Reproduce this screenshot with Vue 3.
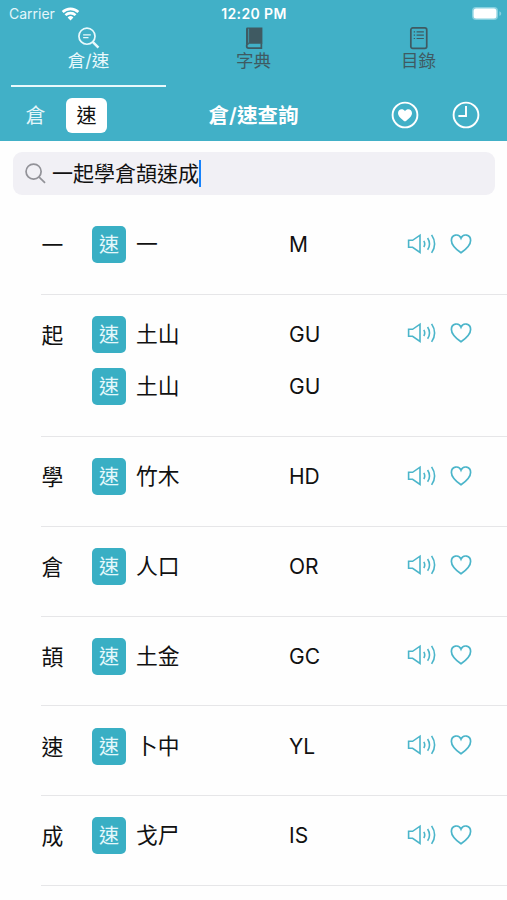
<script setup>
    import {ref} from 'vue';

    const mode = ref('速');
    const keyword = ref('一起學倉頡速成');

    const rows = [
        {word: '一', codes: [{radicals: '一', keys: 'M'}]},
        {word: '起', codes: [{radicals: '土山', keys: 'GU'}, {radicals: '土山', keys: 'GU'}]},
        {word: '學', codes: [{radicals: '竹木', keys: 'HD'}]},
        {word: '倉', codes: [{radicals: '人口', keys: 'OR'}]},
        {word: '頡', codes: [{radicals: '土金', keys: 'GC'}]},
        {word: '速', codes: [{radicals: '卜中', keys: 'YL'}]},
        {word: '成', codes: [{radicals: '戈尸', keys: 'IS'}]},
    ];
</script>
<template>
    <div class="app">
        <header class="header">
            <div class="status">
                <div class="carrier">
                    <span>Carrier</span>
                    <svg class="wifi" viewBox="0 0 20 15">
                        <path d="M1.6 5.4a12 12 0 0 1 16.8 0" />
                        <path d="M4.6 8.7a7.8 7.8 0 0 1 10.8 0" />
                        <path class="solid" d="M10 14.4 6.9 11.2a4.5 4.5 0 0 1 6.2 0z" />
                    </svg>
                </div>
                <span class="time">12:20 PM</span>
                <svg class="battery" viewBox="0 0 31 15">
                    <rect class="shell" x="1" y="1" width="26" height="13" rx="4" />
                    <rect class="level" x="2.6" y="2.6" width="22.8" height="9.8" rx="2.5" />
                    <path class="cap" d="M28.4 5.2c2.4.8 2.4 3.8 0 4.6z" />
                </svg>
            </div>
            <nav class="tabs">
                <div class="tab active">
                    <svg class="tab-icon" viewBox="0 0 24 24">
                        <circle cx="10.4" cy="9.6" r="8.4" />
                        <path class="handle" d="M16.4 15.6l6 6" />
                        <path class="thin" d="M6.4 8.1h8M6.4 11.1h5.6" />
                    </svg>
                    <span>倉/速</span>
                </div>
                <div class="tab">
                    <svg class="tab-icon" viewBox="0 0 24 24">
                        <path class="solid" d="M5.5 .4h15.8v17H6.6c-1.5 0-2.4.7-2.4 1.9V2.4C4.2 1 4.7.4 5.5.4z" />
                        <path d="M20.2 17v5H6.8c-2.6 0-2.6-4.2 0-4.3" />
                        <path class="spine" d="M6.9 1.8v14.6" />
                    </svg>
                    <span>字典</span>
                </div>
                <div class="tab">
                    <svg class="tab-icon" viewBox="0 0 24 24">
                        <rect x="4" y="1" width="16.6" height="21.4" rx="2" />
                        <path class="thin" d="M7 5.2h1.4M7 8.6h1.4M7 12h1.4M10 5.2h7.6M10 8.6h7.6M10 12h7.6" />
                    </svg>
                    <span>目錄</span>
                </div>
            </nav>
            <div class="bar">
                <div class="switch">
                    <button :class="{selected: mode === '倉'}" @click="mode = '倉'">倉</button>
                    <button :class="{selected: mode === '速'}" @click="mode = '速'">速</button>
                </div>
                <h1 class="title">倉/速查詢</h1>
                <div class="actions">
                    <svg viewBox="0 0 28 28">
                        <circle cx="14" cy="14" r="12.4" />
                        <path class="solid" d="M14 20.6C10.2 17.8 7 15 7 11.9c0-4 5-5.1 7-1.7 2-3.4 7-2.3 7 1.7 0 3.1-3.2 5.9-7 8.7z" />
                    </svg>
                    <svg viewBox="0 0 28 28">
                        <circle cx="14" cy="14" r="12.4" />
                        <path class="hands" d="M14 5V15H6.4" />
                    </svg>
                </div>
            </div>
        </header>
        <div class="search">
            <svg class="search-icon" viewBox="0 0 22 22">
                <circle cx="9" cy="9" r="7.9" />
                <path d="M14.8 14.8l6.2 6" />
            </svg>
            <span>{{ keyword }}</span>
            <i class="caret"></i>
        </div>
        <div class="list">
            <div v-for="row in rows" :key="row.word" class="row">
                <span class="word">{{ row.word }}</span>
                <div class="codes">
                    <div v-for="(code, i) in row.codes" :key="i" class="code">
                        <span class="badge">速</span>
                        <span class="radicals">{{ code.radicals }}</span>
                        <span class="keys">{{ code.keys }}</span>
                    </div>
                </div>
                <div class="icons">
                    <svg class="speaker" viewBox="0 0 30 22">
                        <path d="M1.6 7.3h4L13 2.2v17.2l-7.4-5.1h-4z" />
                        <path d="M16.8 7.8c1.2 2 1.2 4.2 0 6.2M20.6 5c2.4 3.7 2.4 8.1 0 11.8M24.6 1.9c3.8 5.7 3.8 12.3 0 18" />
                    </svg>
                    <svg class="heart" viewBox="0 0 22 22">
                        <path d="M11 19.8C5.4 15.8 1.4 12 1.4 7.4 1.4 1.6 8.8 0 11 5.2 13.2 0 20.6 1.6 20.6 7.4c0 4.6-4 8.4-9.6 12.4z" />
                    </svg>
                </div>
            </div>
        </div>
    </div>
</template>
<style>
body {
    margin: 0;
    background: #fefefe;
}
</style>
<style scoped>
.app {
    width: 507px;
    height: 900px;
    overflow: hidden;
    background: #fefefe;
    color: #111;
    font-family: Inter, "Noto Sans CJK TC", sans-serif;
}

svg {
    display: block;
    fill: none;
    stroke: currentColor;
    stroke-width: 1.8;
}

.solid {
    fill: currentColor;
    stroke: none;
}

.header {
    height: 141px;
    background: #41b0c7;
    color: #fff;
}

.status {
    display: grid;
    grid-template-columns: 1fr auto 1fr;
    align-items: center;
    height: 27px;
    padding: 0 5px 0 9px;
    box-sizing: border-box;
    font-size: 14px;
    line-height: 27px;
}

.carrier {
    display: flex;
    align-items: center;
    gap: 6px;
    color: #e4f6fa;
}

.wifi {
    width: 19px;
    height: 14px;
    color: #fff;
    stroke-width: 2.8;
}

.time {
    margin-right: 3px;
    font-weight: 600;
    letter-spacing: .4px;
}

.battery {
    width: 31px;
    height: 15px;
    justify-self: end;
    stroke: none;
}

.shell {
    fill: #86d0df;
}

.level {
    fill: #fff;
}

.cap {
    fill: #86d0df;
}

.tabs {
    display: grid;
    grid-template-columns: repeat(3, 1fr);
    gap: 10px;
    height: 60px;
    padding: 0 11px;
}

.tab {
    display: flex;
    flex-direction: column;
    align-items: center;
    box-sizing: border-box;
    border-bottom: 2px solid transparent;
    color: #3f5a62;
    font-size: 17.5px;
    line-height: 22px;
}

.tab.active {
    color: #e9f9fc;
    border-color: #e9f9fc;
}

.tab-icon {
    width: 23px;
    height: 23px;
    stroke-width: 1.8;
}

.tab-icon .handle {
    stroke-width: 2.6;
}

.tab-icon .thin {
    stroke-width: 1.3;
}

.tab-icon .spine {
    stroke: #41b0c7;
    stroke-width: .7;
}

.bar {
    display: grid;
    grid-template-columns: 1fr auto 1fr;
    align-items: center;
    height: 54px;
    padding: 1px 27px 0 15px;
    box-sizing: border-box;
}

.switch {
    display: flex;
    gap: 10px;
    padding-top: 1px;
}

.switch button {
    width: 41px;
    height: 35px;
    padding: 2px 0 0;
    border: 0;
    border-radius: 6px;
    background: none;
    color: #e4f6fa;
    font: inherit;
    font-size: 20px;
    line-height: 33px;
}

.switch .selected {
    background: #fff;
    color: #111;
}

.title {
    margin: 2px 0 0 12px;
    font-size: 20.5px;
    font-weight: 600;
    line-height: 30px;
}

.actions {
    display: flex;
    gap: 33px;
    justify-content: flex-end;
}

.actions svg {
    width: 28px;
    height: 28px;
    stroke-width: 1.9;
}

.search {
    display: flex;
    align-items: center;
    height: 43px;
    margin: 11px 12px 0 13px;
    padding-left: 12px;
    box-sizing: border-box;
    border-radius: 9px;
    background: #f1f0f5;
    font-size: 21px;
}

.search span {
    padding-top: 1px;
    line-height: 42px;
}

.search-icon {
    width: 21px;
    height: 21px;
    margin-right: 6px;
    color: #929298;
}

.caret {
    width: 2px;
    height: 27px;
    background: #1682fb;
}

.list {
    padding: 10px 0 0 41px;
}

.row {
    display: flex;
    align-items: flex-start;
    padding-top: 21.1px;
    border-bottom: 1px solid #e6e6e8;
    font-size: 21.8px;
    line-height: 37px;
}

.word {
    width: 51px;
    padding-top: 1px;
    text-indent: .5px;
}

.codes {
    display: flex;
    flex-direction: column;
    gap: 15.5px;
    flex: 1;
    padding-bottom: 30.7px;
}

.code {
    display: flex;
    height: 37px;
}

.badge {
    width: 34px;
    margin-right: 10px;
    border-radius: 5px;
    background: #39afc4;
    color: #e4f8fb;
    font-size: 20px;
    line-height: 39px;
    text-align: center;
}

.radicals {
    width: 153px;
}

.keys {
    font-size: 21px;
}

.icons {
    display: flex;
    align-items: center;
    gap: 13px;
    height: 35px;
    padding-right: 35px;
    color: #4bb5ca;
}

.speaker {
    width: 30px;
    height: 22px;
    stroke-width: 1.6;
}

.heart {
    width: 22px;
    height: 22px;
    stroke-width: 1.7;
}
</style>
